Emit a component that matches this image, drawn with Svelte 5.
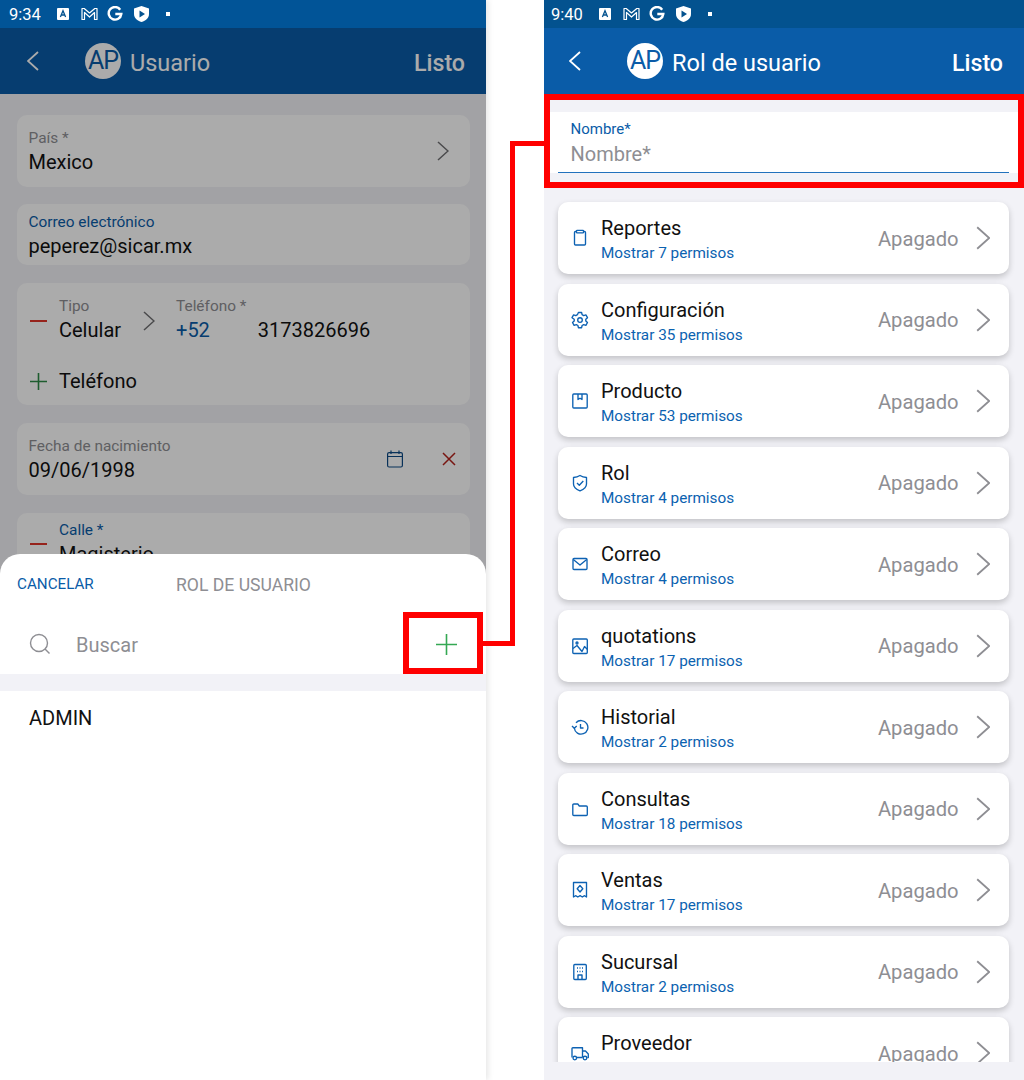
<script>
    const permisos = [
        { name: "Reportes", count: 7, icon: "clip" },
        { name: "Configuración", count: 35, icon: "gear" },
        { name: "Producto", count: 53, icon: "box" },
        { name: "Rol", count: 4, icon: "shield" },
        { name: "Correo", count: 4, icon: "mail" },
        { name: "quotations", count: 17, icon: "image" },
        { name: "Historial", count: 2, icon: "history" },
        { name: "Consultas", count: 18, icon: "folder" },
        { name: "Ventas", count: 17, icon: "receipt" },
        { name: "Sucursal", count: 2, icon: "building" },
        { name: "Proveedor", count: 14, icon: "truck" }
    ];
</script>

{#snippet statusbar(time)}
    <div class="status">
        <span class="time">{time}</span>
        <svg class="st-a" width="12" height="12" viewBox="0 0 12 12"><rect width="12" height="12" rx="1" fill="#fff" /><path d="M3.400 9 6 2.800 8.600 9M4.400 7h3.200" fill="none" stroke="#03528f" stroke-width="1.300" /></svg>
        <svg class="st-m" width="17" height="14" viewBox="0 0 17 14"><path d="M1 12.500V1.500h2.200L8.500 6l5.300-4.500H16v11h-2.500V5.500L8.500 10l-5-4.500v7z" fill="none" stroke="#fff" stroke-width="1.200" stroke-linejoin="round" /></svg>
        <svg class="st-g" width="16" height="16" viewBox="0 0 16 16"><path d="M13.200 3.700A6.300 6.300 0 1 0 14.300 8H8.300" fill="none" stroke="#fff" stroke-width="2.400" /></svg>
        <svg class="st-s" width="15" height="16" viewBox="0 0 15 16"><path d="M7.500 0 15 2.500V8c0 4-3.200 6.800-7.500 8C3.200 14.800 0 12 0 8V2.500z" fill="#fff" /><path d="M5.500 4.500 11 8l-5.500 3.500z" fill="#03528f" /></svg>
        <span class="dot"></span>
    </div>
{/snippet}

{#snippet chevron(size, color)}
    <svg width={size * 0.6} height={size} viewBox="0 0 12 20"><path d="M1 1l10 9-10 9" fill="none" stroke={color} stroke-width="1.500" /></svg>
{/snippet}

{#snippet header(title, action)}
    <div class="header">
        <svg class="back" width="12" height="20" viewBox="0 0 12 20"><path d="M11 1 1 10l10 9" fill="none" stroke="#fff" stroke-width="1.800" /></svg>
        <span class="avatar">AP</span>
        <span class="title">{title}</span>
        <span class="action">{action}</span>
    </div>
{/snippet}

{#snippet icon(kind)}
    <svg class="ic" width="18" height="18" viewBox="0 0 18 18" fill="none" stroke="#0d62b3" stroke-width="1.350" stroke-linejoin="round">
        {#if kind === "clip"}
            <path d="M5.500 2.500H4.500a1 1 0 0 0-1 1v11.500a1 1 0 0 0 1 1h9a1 1 0 0 0 1-1V3.500a1 1 0 0 0-1-1h-1" />
            <rect x="5.500" y="1.300" width="7" height="2.600" rx=".6" />
        {:else if kind === "gear"}
            <circle cx="9" cy="9" r="2.300" />
            <path d="M7.400 1.500h3.200l.5 2.200 1.600.9 2.200-.7 1.600 2.800-1.700 1.500v1.800l1.700 1.500-1.600 2.800-2.200-.7-1.600.9-.5 2.200H7.400l-.5-2.200-1.600-.9-2.200.7-1.600-2.800 1.700-1.500V8.200L1 6.700l1.600-2.800 2.200.7 1.600-.9z" />
        {:else if kind === "box"}
            <rect x="1.800" y="2" width="14.400" height="14" rx="1" />
            <path d="M7 2v5.500l2-1.300 2 1.300V2" />
        {:else if kind === "shield"}
            <path d="M9 1.500c2 1.200 4 1.800 6.500 2v6.500c0 3-3 5.500-6.500 6.800C5.500 15.500 2.500 13 2.500 10V3.500C5 3.300 7 2.700 9 1.500z" />
            <path d="M6 9l2.300 2.300L12.300 7" />
        {:else if kind === "mail"}
            <rect x="2" y="3.500" width="14" height="11" rx="1" />
            <path d="M2.300 4.500 9 10l6.700-5.500" />
        {:else if kind === "image"}
            <rect x="1.800" y="2" width="14.500" height="14.500" rx="1" />
            <circle cx="6" cy="6" r="1" />
            <path d="M2 11.500l4-3 5 6 2.500-5 3 3" />
        {:else if kind === "history"}
            <path d="M3.300 10A6.800 6.800 0 1 0 5 4.800" />
            <path d="M1 8l2.300 2.300L5.700 8M9.500 6v4h3" />
        {:else if kind === "folder"}
            <path d="M1.800 5a1 1 0 0 1 1-1h4l1.500 2h7a1 1 0 0 1 1 1v7.500a1 1 0 0 1-1 1H2.800a1 1 0 0 1-1-1z" />
        {:else if kind === "receipt"}
            <path d="M2.500 16V1.500h13V16l-2-1.300-2.200 1.300-2.200-1.300-2.300 1.300-2.200-1.300z" />
            <path d="M9 4.500 11.800 7.800 9 11 6.200 7.800z" />
        {:else if kind === "building"}
            <rect x="2.800" y="1.500" width="12.500" height="15" rx="1" />
            <path d="M6 5h1M8.500 5h1M11 5h1M6 8.500h1M8.500 8.500h1M11 8.500h1M7 16.500V12h4v4.500" stroke-width="1.400" />
        {:else}
            <path d="M1 13.500V4.500a.8.8 0 0 1 .8-.8h9.700v9.800M11.500 7h3l2.800 3v3.500h-1M6 13.500h5.500" />
            <circle cx="3.800" cy="14" r="1.800" />
            <circle cx="14" cy="14" r="1.800" />
        {/if}
    </svg>
{/snippet}

<div class="page">
    <section class="phone left">
        {@render statusbar("9:34")}
        {@render header("Usuario", "Listo")}
        <div class="form">
            <div class="field pais">
                <div class="stack">
                    <span class="label">País *</span>
                    <span class="value">Mexico</span>
                </div>
                {@render chevron(20, "#6f6f72")}
            </div>
            <div class="field correo">
                <div class="stack">
                    <span class="label blue">Correo electrónico</span>
                    <span class="value">peperez@sicar.mx</span>
                </div>
            </div>
            <div class="field tel">
                <div class="tel-row">
                    <span class="minus"></span>
                    <div class="stack tipo">
                        <span class="label">Tipo</span>
                        <span class="value">Celular</span>
                    </div>
                    <span class="tel-chev">{@render chevron(20, "#6f6f72")}</span>
                    <div class="stack">
                        <span class="label">Teléfono *</span>
                        <span class="value"><span class="lada">+52</span>3173826696</span>
                    </div>
                </div>
                <div class="add-row">
                    <svg width="17" height="17" viewBox="0 0 17 17"><path d="M8.500 0v17M0 8.500h17" stroke="#2e8b46" stroke-width="1.600" /></svg>
                    <span class="value">Teléfono</span>
                </div>
            </div>
            <div class="field fecha">
                <div class="stack">
                    <span class="label">Fecha de nacimiento</span>
                    <span class="value">09/06/1998</span>
                </div>
                <svg class="cal" width="16" height="18" viewBox="0 0 16 18" fill="none" stroke="#0d4a85" stroke-width="1.200"><rect x=".6" y="2.600" width="14.800" height="14.400" rx="1.500" /><path d="M.6 6.500h14.800M4 .5v3.500M12 .5v3.500" /></svg>
                <svg width="14" height="14" viewBox="0 0 14 14"><path d="M1 1l12 12M13 1 1 13" stroke="#b5211b" stroke-width="1.500" /></svg>
            </div>
            <div class="field calle">
                <span class="minus"></span>
                <div class="stack tipo">
                    <span class="label blue">Calle *</span>
                    <span class="value">Magisterio</span>
                </div>
            </div>
        </div>
        <div class="scrim"></div>
        <div class="sheet">
            <div class="sheet-head">
                <span class="cancel">CANCELAR</span>
                <span class="sheet-title">ROL DE USUARIO</span>
            </div>
            <div class="search">
                <svg width="22" height="22" viewBox="0 0 22 22" fill="none" stroke="#8e8e93" stroke-width="1.400"><circle cx="10" cy="10" r="8.500" /><path d="M16 16l4.500 4.500" /></svg>
                <span class="placeholder">Buscar</span>
                <svg class="plus" width="21" height="21" viewBox="0 0 21 21"><path d="M10.500 0v21M0 10.500h21" stroke="#34a853" stroke-width="1.600" /></svg>
            </div>
            <div class="band"></div>
            <div class="result">ADMIN</div>
        </div>
    </section>

    <section class="phone right">
        {@render statusbar("9:40")}
        {@render header("Rol de usuario", "Listo")}
        <div class="content">
            <div class="nombre">
                <span class="nombre-label">Nombre*</span>
                <span class="nombre-input">Nombre*</span>
            </div>
            <div class="list">
                {#each permisos as p}
                    <div class="row">
                        {@render icon(p.icon)}
                        <div class="row-text">
                            <span class="row-name">{p.name}</span>
                            <span class="row-sub">Mostrar {p.count} permisos</span>
                        </div>
                        <span class="state">Apagado</span>
                        {@render chevron(24, "#8e8e93")}
                    </div>
                {/each}
            </div>
        </div>
        <div class="foot"></div>
    </section>

    <div class="mark mark-plus"></div>
    <div class="mark mark-nombre"></div>
    <div class="link"></div>
</div>

<style>
    :global(body) {
        margin: 0;
        background: #fff;
    }
    .page {
        position: relative;
        width: 1024px;
        height: 1080px;
        display: flex;
        justify-content: space-between;
        overflow: hidden;
        font-family: Roboto, "Liberation Sans", sans-serif;
        color: #111;
    }
    .phone {
        position: relative;
        height: 1080px;
        background: #f2f2f7;
        display: flex;
        flex-direction: column;
        overflow: hidden;
    }
    .left {
        width: 486px;
        box-shadow: 2px 0 6px rgba(0, 0, 0, 0.1);
        overflow: visible;
    }
    .right {
        width: 480px;
    }
    .status {
        height: 28px;
        flex: none;
        background: #03528f;
        display: flex;
        align-items: center;
        padding-left: 9px;
        color: #fff;
        position: relative;
        z-index: 3;
    }
    .left .status {
        background: #015497;
    }
    .right .status {
        padding-left: 7px;
    }
    .time {
        font-size: 16.500px;
        width: 33px;
    }
    .st-a {
        margin-left: 15px;
    }
    .st-m {
        margin-left: 12px;
    }
    .st-g {
        margin-left: 9px;
    }
    .st-s {
        margin-left: 11px;
    }
    .dot {
        width: 4px;
        height: 4px;
        background: #fff;
        margin-left: 17px;
    }
    .header {
        height: 66px;
        flex: none;
        background: #0a5ca8;
        display: flex;
        align-items: center;
        color: #fff;
        box-sizing: border-box;
        padding: 4px 21px 0 27px;
    }
    .right .header {
        padding-left: 25px;
    }
    .back {
        margin-right: 46px;
        margin-top: -4px;
    }
    .avatar {
        width: 36px;
        height: 36px;
        border-radius: 50%;
        background: #fff;
        color: #0a5ca8;
        font-size: 25px;
        line-height: 36px;
        text-align: center;
        letter-spacing: -1px;
        margin-right: 9px;
        margin-top: -4px;
    }
    .title {
        font-size: 23.500px;
        flex: 1;
    }
    .action {
        font-size: 23.200px;
        font-weight: 500;
    }
    .form {
        padding: 21px 16px 0 17px;
        display: flex;
        flex-direction: column;
        gap: 18px;
        flex: 1;
    }
    .field {
        background: #fff;
        border-radius: 10px;
        display: flex;
        align-items: center;
        box-sizing: border-box;
        padding: 0 12px 0 11.500px;
    }
    .pais,
    .fecha {
        height: 72px;
        padding-right: 21px;
    }
    .pais {
        justify-content: space-between;
    }
    .correo {
        height: 61px;
        margin-top: -1px;
    }
    .tel {
        height: 122px;
        display: block;
        padding-top: 14px;
    }
    .fecha .stack {
        flex: 1;
    }
    .fecha {
        padding-right: 14px;
    }
    .cal {
        margin-right: 39px;
    }
    .calle {
        height: 80px;
        align-items: flex-start;
        padding-top: 8px;
    }
    .calle .minus {
        margin-top: 22px;
    }
    .stack {
        display: flex;
        flex-direction: column;
        padding-top: 4px;
    }
    .tel .stack,
    .calle .stack {
        padding-top: 0;
    }
    .label {
        font-size: 15.400px;
        line-height: 18px;
        color: #8e8e93;
    }
    .label.blue {
        color: #0a5ca8;
    }
    .value {
        font-size: 20px;
        line-height: 30px;
        color: #111;
    }
    .minus {
        width: 17px;
        height: 2px;
        background: #e0352b;
        flex: none;
        margin-left: 1px;
    }
    .tipo {
        margin-left: 12.500px;
    }
    .tel-row {
        display: flex;
        align-items: center;
    }
    .tel-chev {
        margin: 0 21px 0 22px;
        display: flex;
    }
    .lada {
        color: #0a5ca8;
        margin-right: 48px;
    }
    .add-row {
        display: flex;
        align-items: center;
        gap: 12.500px;
        margin: 21px 0 0 1px;
    }
    .scrim {
        position: absolute;
        inset: 28px 0 0 0;
        background: rgba(0, 0, 0, 0.33);
    }
    .sheet {
        position: absolute;
        left: 0;
        right: 0;
        top: 554px;
        bottom: 0;
        background: #fff;
        border-radius: 20px 20px 0 0;
    }
    .sheet-head {
        height: 60px;
        display: flex;
        align-items: center;
        padding-left: 17px;
    }
    .cancel {
        font-size: 15.200px;
        color: #0a5ca8;
        width: 159px;
    }
    .sheet-title {
        font-size: 17.600px;
        color: #8e8e93;
        margin-top: 2px;
    }
    .search {
        height: 60px;
        display: flex;
        align-items: center;
        padding-left: 29px;
    }
    .placeholder {
        font-size: 20px;
        color: #8e8e93;
        margin-left: 25px;
        flex: 1;
        padding-top: 2px;
    }
    .plus {
        margin-right: 29px;
    }
    .band {
        height: 17px;
        background: #f2f2f7;
    }
    .result {
        font-size: 20px;
        padding: 15px 29px;
        line-height: 24px;
    }
    .content {
        flex: 1;
        overflow: hidden;
        padding-top: 18px;
    }
    .nombre {
        height: 61px;
        box-sizing: border-box;
        background: #fff;
        padding: 8px 14px 0 26.500px;
        display: flex;
        flex-direction: column;
        position: relative;
    }
    .nombre::after {
        content: "";
        position: absolute;
        left: 14px;
        right: 15px;
        bottom: 0;
        height: 1px;
        background: #2272bd;
    }
    .nombre-label {
        font-size: 15px;
        line-height: 18px;
        color: #0a5ca8;
    }
    .nombre-input {
        font-size: 20px;
        line-height: 32px;
        color: #8e8e93;
    }
    .list {
        padding: 29.100px 15px 0 14px;
    }
    .row {
        height: 72px;
        background: #fff;
        border-radius: 10px;
        box-shadow: 0 3px 6px rgba(0, 0, 0, 0.2);
        display: flex;
        align-items: center;
        box-sizing: border-box;
        padding: 0 19px 0 13px;
        margin-bottom: 9.500px;
    }
    .ic {
        flex: none;
        margin-right: 12px;
    }
    .row-text {
        flex: 1;
        display: flex;
        flex-direction: column;
        padding-top: 2px;
    }
    .row-name {
        font-size: 20px;
        line-height: 29px;
        margin-top: -1px;
    }
    .row-sub {
        font-size: 15.300px;
        line-height: 20px;
        color: #0b62b0;
    }
    .state {
        font-size: 20.200px;
        color: #8e8e93;
        margin-right: 17px;
        padding-top: 1px;
    }
    .foot {
        height: 18px;
        flex: none;
        background: #f2f2f7;
    }
    .mark {
        position: absolute;
        box-sizing: border-box;
        border: 6px solid #f00;
    }
    .mark-plus {
        left: 403px;
        top: 612px;
        width: 80px;
        height: 62px;
    }
    .mark-nombre {
        left: 544px;
        top: 94px;
        width: 480px;
        height: 94px;
    }
    .link {
        position: absolute;
        left: 483px;
        top: 141px;
        width: 31px;
        height: 505px;
    }
    .link::before {
        content: "";
        position: absolute;
        left: 27px;
        top: 0;
        width: 34px;
        height: 505px;
        box-sizing: border-box;
        border-left: 5px solid #f00;
        border-top: 5px solid #f00;
    }
    .link::after {
        content: "";
        position: absolute;
        left: 0;
        bottom: 0;
        width: 32px;
        height: 5px;
        background: #f00;
    }
</style>
